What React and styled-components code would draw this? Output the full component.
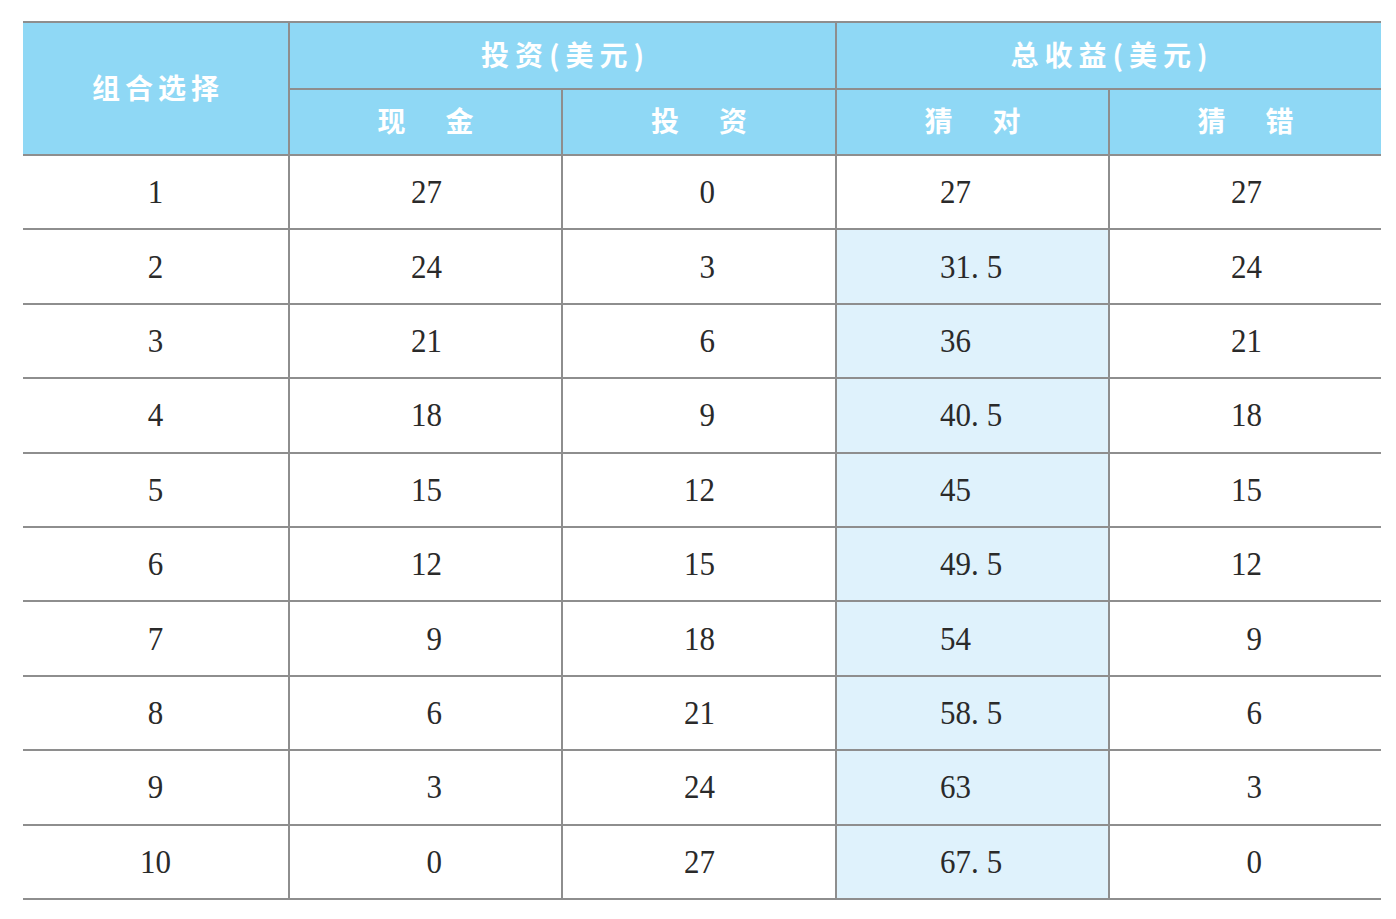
import React from "react";
import styled, { createGlobalStyle, css } from "styled-components";

const Global = createGlobalStyle`
  html, body { margin: 0; padding: 0; background: #ffffff; }
  body { font-family: "Liberation Serif", "Noto Sans CJK SC", serif; }
`;

const Page = styled.div`
  padding: 21px 0 0 23px;
`;

const LINE = "#8e8e8e";

const Grid = styled.div`
  display: grid;
  grid-template-columns: 267px 273px 274px 273px 271px;
  grid-template-rows: 67px 66px repeat(10, 74.4px);
  border-top: 2px solid ${LINE};
  width: 1358px;
`;

const Head = styled.div`
  background: #8fd8f5;
  color: #ffffff;
  font-family: "Noto Sans CJK SC", "Noto Sans", sans-serif;
  font-weight: 700;
  font-size: 28px;
  letter-spacing: ${(p) => p.$ls ?? 6}px;
  padding: 0 0 4px ${(p) => p.$ls ?? 6}px;
  display: flex;
  align-items: center;
  justify-content: center;
  border-bottom: 2px solid ${LINE};
  border-right: ${(p) => (p.$last ? "none" : `2px solid ${LINE}`)};
  box-sizing: border-box;
  white-space: pre;
  ${(p) => p.$span && css`grid-column: span ${p.$span};`}
  ${(p) => p.$rows && css`grid-row: span ${p.$rows};`}
`;

const Cell = styled.div`
  display: flex;
  align-items: center;
  justify-content: ${(p) =>
    p.$align === "right" ? "flex-end" : p.$align === "left" ? "flex-start" : "center"};
  padding: ${(p) =>
    p.$align === "right" ? `0 ${p.$pad}px 0 0` : p.$align === "left" ? `0 0 0 ${p.$pad}px` : "0"};
  background: ${(p) => (p.$hl ? "#dff2fc" : "#ffffff")};
  border-bottom: 2px solid ${LINE};
  border-right: ${(p) => (p.$last ? "none" : `2px solid ${LINE}`)};
  box-sizing: border-box;
  font-family: "Liberation Serif", serif;
  font-size: 31px;
  color: #2a2a2a;
`;

const Value = styled.span`
  display: inline-block;
  transform: scaleY(1.08);
  font-weight: 400;
  -webkit-text-stroke: 0;
`;

const Dot = styled.span`
  margin-right: 8px;
`;

const rows = [
  [1, 27, 0, "27", 27],
  [2, 24, 3, "31.5", 24],
  [3, 21, 6, "36", 21],
  [4, 18, 9, "40.5", 18],
  [5, 15, 12, "45", 15],
  [6, 12, 15, "49.5", 12],
  [7, 9, 18, "54", 9],
  [8, 6, 21, "58.5", 6],
  [9, 3, 24, "63", 3],
  [10, 0, 27, "67.5", 0],
];

function Num({ v }) {
  const s = String(v);
  if (!s.includes(".")) return <Value>{s}</Value>;
  const [a, b] = s.split(".");
  return (
    <Value>
      {a}
      <Dot>.</Dot>
      {b}
    </Value>
  );
}

export default function App() {
  return (
    <>
      <Global />
      <Page>
        <Grid>
          <Head $rows={2} $ls={5}>组合选择</Head>
          <Head $span={2}>投资(美元)</Head>
          <Head $span={2} $last>总收益(美元)</Head>
          <Head>现　金</Head>
          <Head>投　资</Head>
          <Head>猜　对</Head>
          <Head $last>猜　错</Head>
          {rows.map((r, i) => (
            <React.Fragment key={i}>
              <Cell><Num v={r[0]} /></Cell>
              <Cell $align="right" $pad={119}><Num v={r[1]} /></Cell>
              <Cell $align="right" $pad={120}><Num v={r[2]} /></Cell>
              <Cell $align="left" $pad={103} $hl={i > 0}>
                <Num v={r[3]} />
              </Cell>
              <Cell $align="right" $pad={119} $last><Num v={r[4]} /></Cell>
            </React.Fragment>
          ))}
        </Grid>
      </Page>
    </>
  );
}
